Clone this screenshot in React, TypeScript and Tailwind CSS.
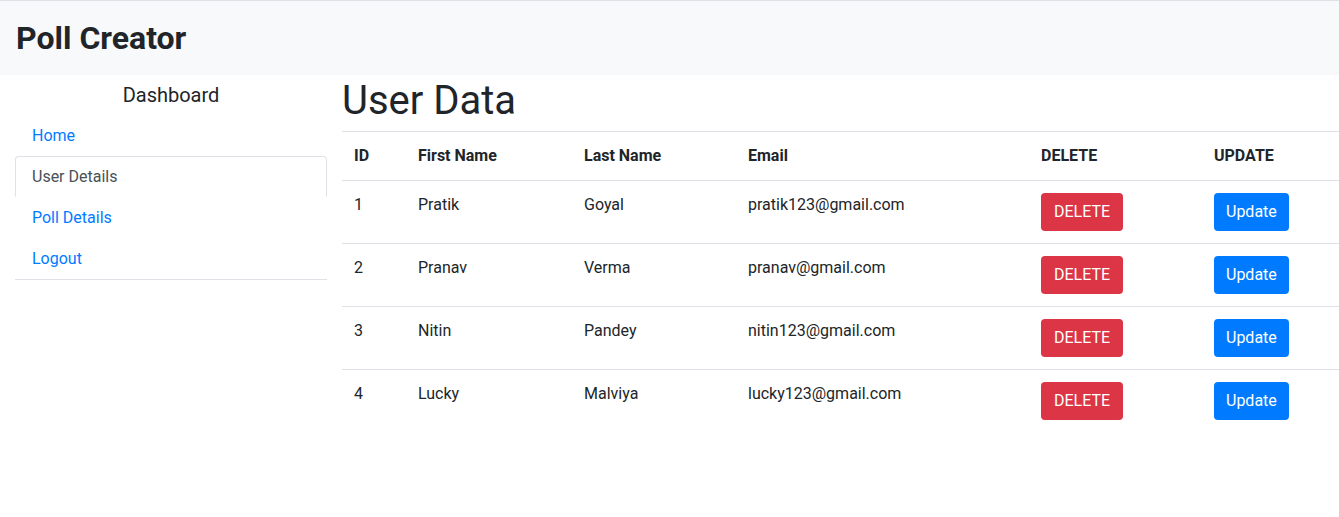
const users = [
  { id: 1, first: "Pratik", last: "Goyal", email: "pratik123@gmail.com" },
  { id: 2, first: "Pranav", last: "Verma", email: "pranav@gmail.com" },
  { id: 3, first: "Nitin", last: "Pandey", email: "nitin123@gmail.com" },
  { id: 4, first: "Lucky", last: "Malviya", email: "lucky123@gmail.com" },
];

const links = ["Home", "User Details", "Poll Details", "Logout"];

export default function App() {
  return (
    <div className="min-h-[517px] bg-white text-[#212529] font-['Roboto',sans-serif] text-base">
      {/* Navbar */}
      <div className="h-[75px] border-t border-[#dee2e6] bg-[#f8f9fa] flex items-center px-4">
        <h2 className="text-[32px] font-bold leading-[38px]">Poll Creator</h2>
      </div>

      <div className="flex">
        {/* Sidebar */}
        <div className="w-[342px] shrink-0 pl-[15px] pr-[15px]">
          <div className="w-[312px]">
            <h5 className="text-center text-[20px] leading-[24px] pt-[8px] pb-[8px] font-normal">Dashboard</h5>
            <ul className="flex flex-col border-b border-[#dee2e6]">
              {links.map((l) => (
                <li key={l}>
                  {l === "User Details" ? (
                    <a className="block h-[41px] px-4 py-2 leading-[24px] border border-[#dee2e6] border-b-white rounded-t-[4px] text-[#495057] bg-white">
                      {l}
                    </a>
                  ) : (
                    <a className="block h-[41px] px-[17px] pt-[9px] pb-[8px] leading-[24px] text-[#007bff]">{l}</a>
                  )}
                </li>
              ))}
            </ul>
          </div>
        </div>

        {/* Main */}
        <div className="flex-1 overflow-hidden">
          <h1 className="text-[40px] leading-[48px] font-normal mt-[2px] mb-[6px]">User Data</h1>
          <table className="w-[1010px] border-collapse text-left">
            <thead>
              <tr className="border-t border-[#dee2e6]">
                <th className="w-[64px] px-3 py-3 font-bold leading-[24px]">ID</th>
                <th className="w-[166px] px-3 py-3 font-bold leading-[24px]">First Name</th>
                <th className="w-[164px] px-3 py-3 font-bold leading-[24px]">Last Name</th>
                <th className="w-[293px] px-3 py-3 font-bold leading-[24px]">Email</th>
                <th className="w-[173px] px-3 py-3 font-bold leading-[24px]">DELETE</th>
                <th className="px-3 py-3 font-bold leading-[24px]">UPDATE</th>
              </tr>
            </thead>
            <tbody>
              {users.map((u) => (
                <tr key={u.id} className="border-t border-[#dee2e6]">
                  <td className="px-3 pt-3 pb-[26px] align-top leading-[24px]">{u.id}</td>
                  <td className="px-3 pt-3 pb-[26px] align-top leading-[24px]">{u.first}</td>
                  <td className="px-3 pt-3 pb-[26px] align-top leading-[24px]">{u.last}</td>
                  <td className="px-3 pt-3 pb-[26px] align-top leading-[24px]">{u.email}</td>
                  <td className="px-3 pt-3 pb-3 align-top">
                    <button className="h-[38px] px-[13px] rounded-[4px] bg-[#dc3545] text-white leading-[24px]">DELETE</button>
                  </td>
                  <td className="px-3 pt-3 pb-3 align-top">
                    <button className="h-[38px] px-3 rounded-[4px] bg-[#007bff] text-white leading-[24px]">Update</button>
                  </td>
                </tr>
              ))}
            </tbody>
          </table>
        </div>
      </div>
    </div>
  );
}
